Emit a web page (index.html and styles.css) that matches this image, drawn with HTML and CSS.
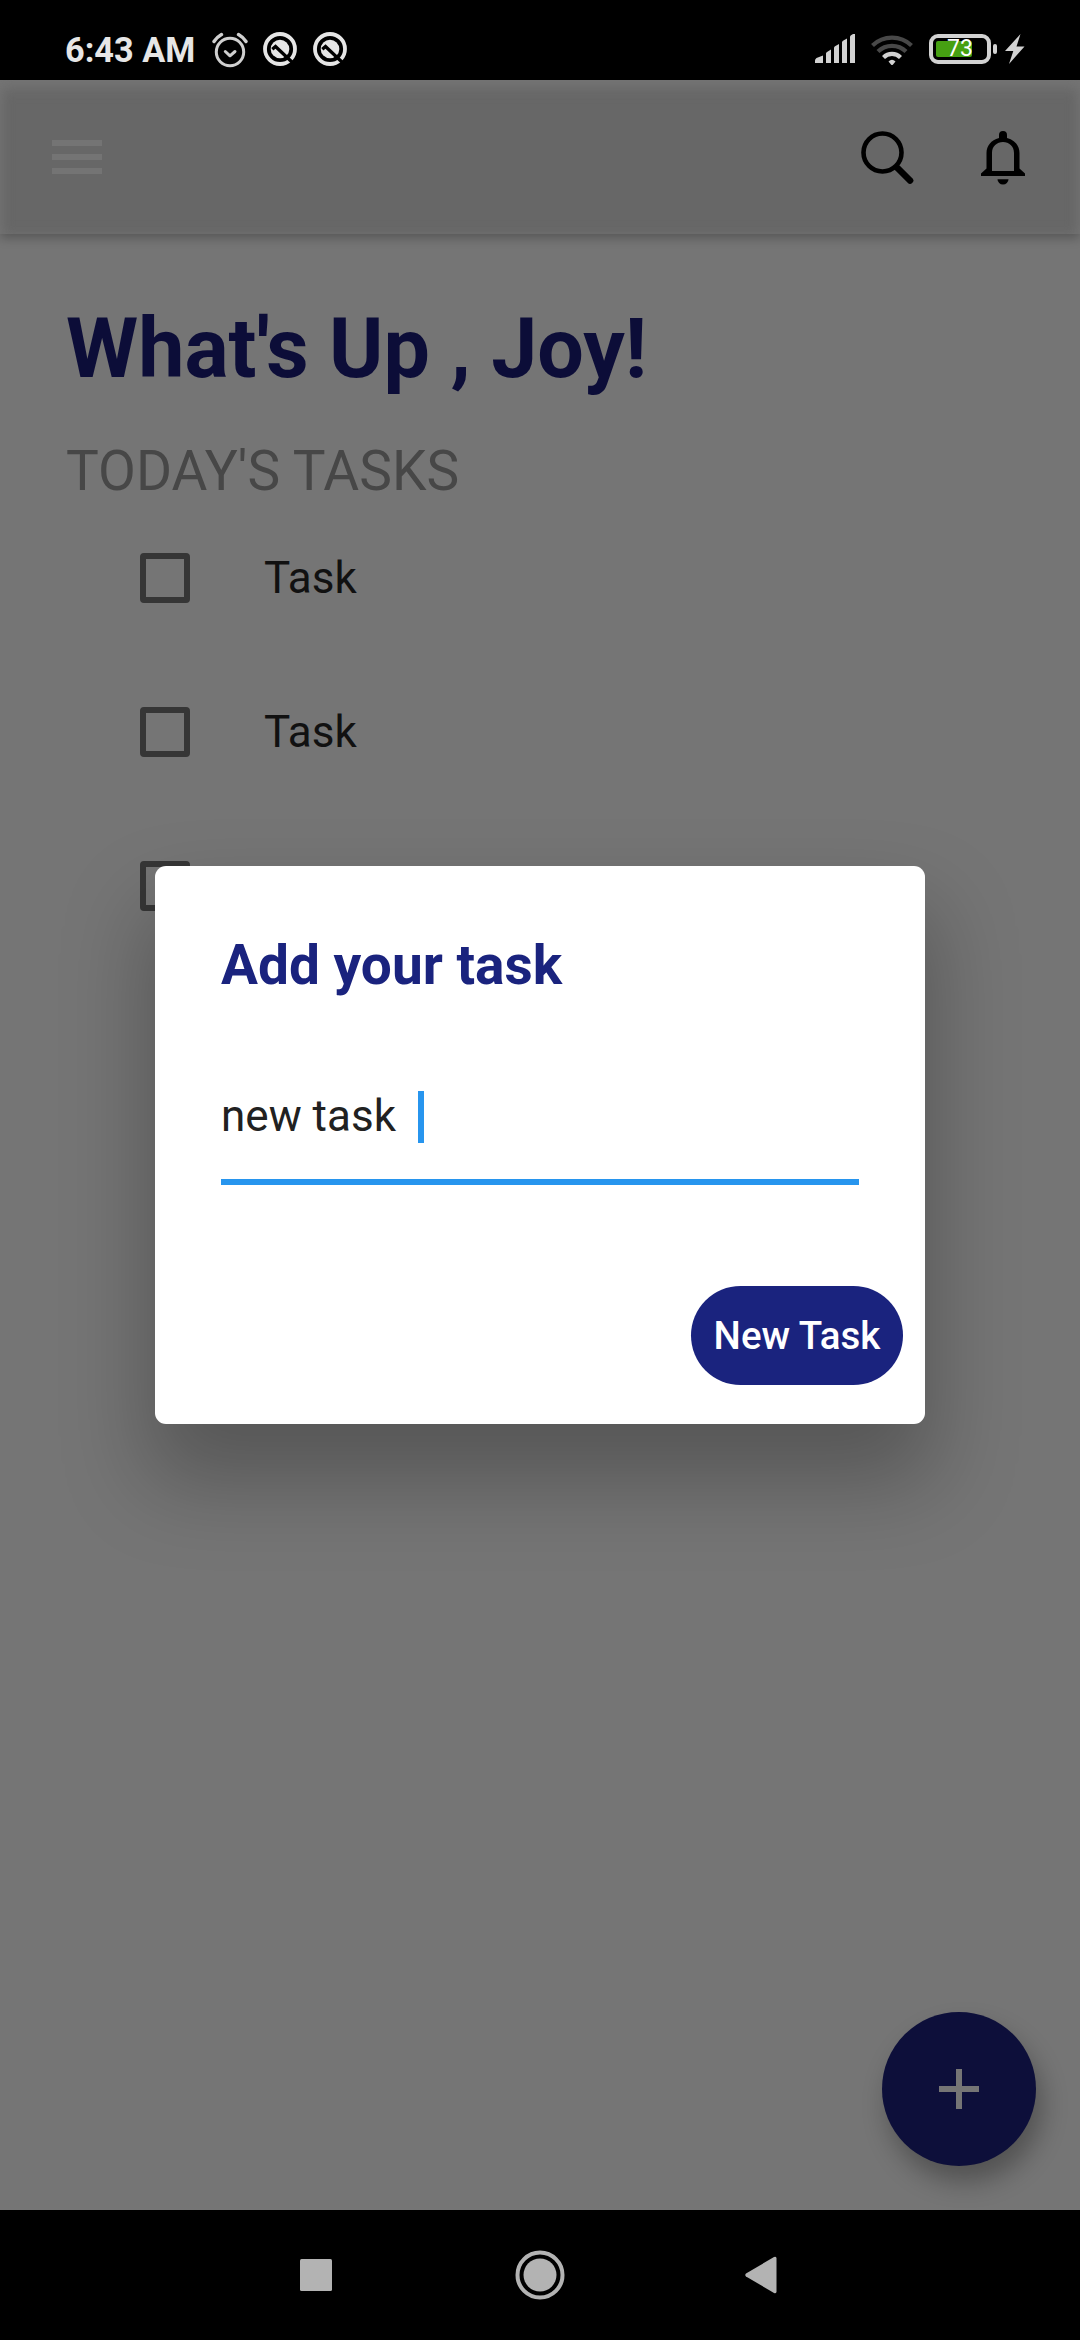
FILE: index.html
```html
<!DOCTYPE html>
<html lang="en">
<head>
<meta charset="utf-8">
<title>Tasks</title>
<link rel="stylesheet" href="styles.css">
</head>
<body>
<div class="phone">
  <header class="status">
    <span class="time">6:43 AM</span>
    <svg class="alarm" width="36" height="36" viewBox="0 0 36 36" fill="none" stroke="#cfcfcf" stroke-width="3" stroke-linecap="round" stroke-linejoin="round">
      <circle cx="18" cy="20" r="13.7"/>
      <path d="M13.3 19.500l4.700 4.300 5-4.300" />
      <path d="M2 9.500q3-4.500 7.500-7M34 9.500q-3-4.500-7.500-7" stroke-width="3.400"/>
    </svg>
    <svg class="qicon" width="34" height="34" viewBox="0 0 34 34">
      <circle cx="17" cy="17" r="15" fill="none" stroke="#e6e6e6" stroke-width="3.800"/>
      <circle cx="17" cy="17" r="9.300" fill="#e6e6e6"/>
      <path d="M9.300 17.200L12.500 14.500L30 31" fill="none" stroke="#000" stroke-width="3.300"/>
    </svg>
    <svg class="qicon" width="34" height="34" viewBox="0 0 34 34">
      <circle cx="17" cy="17" r="15" fill="none" stroke="#e6e6e6" stroke-width="3.800"/>
      <circle cx="17" cy="17" r="9.300" fill="#e6e6e6"/>
      <path d="M9.300 17.200L12.500 14.500L30 31" fill="none" stroke="#000" stroke-width="3.300"/>
    </svg>
    <div class="status-right">
      <svg class="signal" width="40" height="29" viewBox="0 0 40 29" fill="#d2d2d2">
        <path d="M0 29v-2.500q0-1.500 1.500-2.500L8 21.500V29zM11 29V19.500q0-1 1-1.500l4-2.500V29zM19 29V14q0-1 1-1.700l4-2.300V29zM27 29V8.500q0-1 1-1.700l4-2.300V29zM35 29V3q0-1 1-1.700L38 0h2v29z"/>
      </svg>
      <svg class="wifi" width="42" height="32" viewBox="0 0 42 32" fill="none" stroke-width="4.200">
        <path d="M1.500 11.500a28 28 0 0 1 39 0" stroke="#484848"/>
        <path d="M7 17.600a20 20 0 0 1 28 0" stroke="#484848"/>
        <path d="M12.500 23.500a12 12 0 0 1 17 0" stroke="#d2d2d2"/>
        <path d="M17.500 27.500q3.500-3.500 7 0L22 30.500q-1 1-2 0z" fill="#d2d2d2"/>
      </svg>
      <div class="battery"><div class="charge"></div><span class="percent">73</span></div>
      <div class="nub"></div>
      <svg class="bolt" width="20" height="30" viewBox="0 0 20 30" fill="#d2d2d2"><path d="M15.500 0L0 17h8.300L4 30l15.500-17.500h-8z"/></svg>
    </div>
  </header>

  <nav class="appbar">
    <svg width="50" height="34" viewBox="0 0 50 34" fill="#747474"><path d="M0 0h50v6H0zM0 14h50v6H0zM0 28h50v6H0z"/></svg>
    <div class="actions">
      <svg class="search" width="54" height="54" viewBox="0 0 54 54" fill="none" stroke="#000">
        <circle cx="21.500" cy="21.500" r="19" stroke-width="4.600"/>
        <path d="M36.500 37L49 49.500" stroke-width="6.600" stroke-linecap="round"/>
        <path d="M34.500 35l4 4" stroke-width="5"/>
      </svg>
      <svg width="44" height="54" viewBox="0 0 44 54">
        <path fill-rule="evenodd" d="M18 7V4a4 4 0 0 1 8 0v3c8 2 12.500 8 12.500 15v15.500l5.500 5V45H0v-2.500l5.500-5V22C5.500 15 10 9 18 7zM11 40h22V22c0-7-5-11-11-11s-11 4-11 11z"/>
        <path d="M16.500 48.300h11a5.500 5.300 0 0 1-11 0z"/>
      </svg>
    </div>
  </nav>

  <main class="content">
    <h1>What's Up , Joy!</h1>
    <h2>TODAY'S TASKS</h2>
    <ul class="tasks">
      <li><span class="box"></span>Task</li>
      <li><span class="box"></span>Task</li>
      <li><span class="box"></span>Task</li>
    </ul>
    <button class="fab" aria-label="Add"><svg width="40" height="40" viewBox="0 0 40 40" fill="#757575"><path d="M17 0h6v17h17v6H23v17h-6V23H0v-6h17z"/></svg></button>
  </main>

  <footer class="navbar">
    <svg width="32" height="32" viewBox="0 0 32 32" fill="#b3b3b3"><rect width="32" height="32" rx="1.500"/></svg>
    <svg class="home" width="50" height="50" viewBox="0 0 50 50" fill="#b3b3b3"><circle cx="25" cy="25" r="16.500"/><circle cx="25" cy="25" r="22.500" fill="none" stroke="#b3b3b3" stroke-width="4"/></svg>
    <svg width="32" height="38" viewBox="0 0 32 38" fill="#b3b3b3"><path d="M1 17.500L29 1q2.500-1 2.500 1.500v33q0 2.500-2.500 1.500L1 20.500q-1.500-1.500 0-3z"/></svg>
  </footer>

  <section class="dialog">
    <h3>Add your task</h3>
    <div class="field"><span>new task</span><i class="caret"></i></div>
    <button class="submit">New Task</button>
  </section>
</div>
</body>
</html>
```
FILE: styles.css
```css
* { box-sizing: border-box; margin: 0; padding: 0; }
body { font-family: Roboto, sans-serif; background: #757575; }
button { border: 0; font-family: inherit; }
svg { display: block; flex: none; }

.phone {
  position: relative;
  width: 1080px;
  height: 2340px;
  display: flex;
  flex-direction: column;
  overflow: hidden;
}

/* Status bar */
.status {
  height: 80px;
  flex: none;
  display: flex;
  align-items: flex-start;
  background: #000;
  padding: 0 55px 0 65px;
}
.time {
  width: 147px;
  padding-top: 30px;
  font-size: 34.3px;
  line-height: 40px;
  font-weight: 700;
  color: #e6e6e6;
  white-space: nowrap;
}
.alarm { margin-top: 32px; margin-right: 15px; }
.qicon { margin-top: 32px; margin-right: 16px; }
.status-right { display: flex; margin-left: auto; padding-top: 34px; }
.wifi { margin-left: 16px; }
.battery {
  position: relative;
  width: 62px;
  height: 30px;
  margin-left: 16px;
  border: 4px solid #d2d2d2;
  border-radius: 9px;
  padding: 3px;
}
.charge { width: 36px; height: 16px; border-radius: 2px; background: #46a012; }
.percent {
  position: absolute;
  left: 14px;
  top: -1px;
  font-size: 23px;
  line-height: 24px;
  font-weight: 400;
  color: #fff;
}
.nub { width: 4px; height: 10px; margin: 10px 8px 0 2px; border-radius: 2px; background: #d2d2d2; }

/* App bar */
.appbar {
  height: 154px;
  flex: none;
  display: flex;
  justify-content: space-between;
  align-items: flex-start;
  padding: 51px 55px 0 52px;
  background: #676767;
  box-shadow: inset 0 8px 14px #747474, inset 0 0 12px #707070, 0 4px 10px rgba(0, 0, 0, .26);
}
.appbar > svg { margin-top: 9px; }
.actions { display: flex; gap: 66px; }

/* Page content */
.content { position: relative; flex: 1; padding: 66px 66px 0; }
h1 { font-size: 82.5px; line-height: 97px; color: #0c0d38; white-space: nowrap; }
h2 { margin-top: 42px; font-size: 55px; line-height: 64px; font-weight: 400; color: #474747; }
.tasks { list-style: none; margin-top: -2px; }
.tasks li {
  height: 154px;
  display: flex;
  align-items: center;
  padding-left: 74px;
  font-size: 44px;
  color: #111;
}
.box { width: 50px; height: 50px; margin-right: 74px; border: 6px solid #363636; border-radius: 4px; }
.fab {
  position: absolute;
  right: 44px;
  bottom: 44px;
  width: 154px;
  height: 154px;
  border-radius: 50%;
  display: flex;
  align-items: center;
  justify-content: center;
  background: #0d0f3a;
  box-shadow: 6px 16px 26px rgba(0, 0, 0, .3);
}

/* System navigation */
.navbar {
  height: 130px;
  flex: none;
  display: flex;
  align-items: center;
  justify-content: space-between;
  padding: 0 303px 0 300px;
  background: #000;
}
.home { margin-left: 3px; }

/* Dialog */
.dialog {
  position: absolute;
  left: 155px;
  top: 866px;
  width: 770px;
  height: 558px;
  display: flex;
  flex-direction: column;
  padding: 67px 66px 0;
  border-radius: 11px;
  background: #fff;
  box-shadow: 0 50px 85px 8px rgba(0, 0, 0, .26);
}
.dialog h3 { font-size: 55px; line-height: 64px; color: #1a237e; }
.field {
  display: flex;
  align-items: center;
  height: 124px;
  margin-top: 64px;
  padding-bottom: 8px;
  border-bottom: 6px solid #2795ee;
  font-size: 44px;
  color: #212121;
}
.caret { width: 6px; height: 52px; margin: 2px 0 0 22px; background: #2795ee; }
.submit {
  align-self: flex-end;
  width: 212px;
  height: 99px;
  margin: 101px -44px 0 0;
  border-radius: 50px;
  background: #1a237e;
  color: #fff;
  font-size: 38.5px;
  font-weight: 500;
}
```
